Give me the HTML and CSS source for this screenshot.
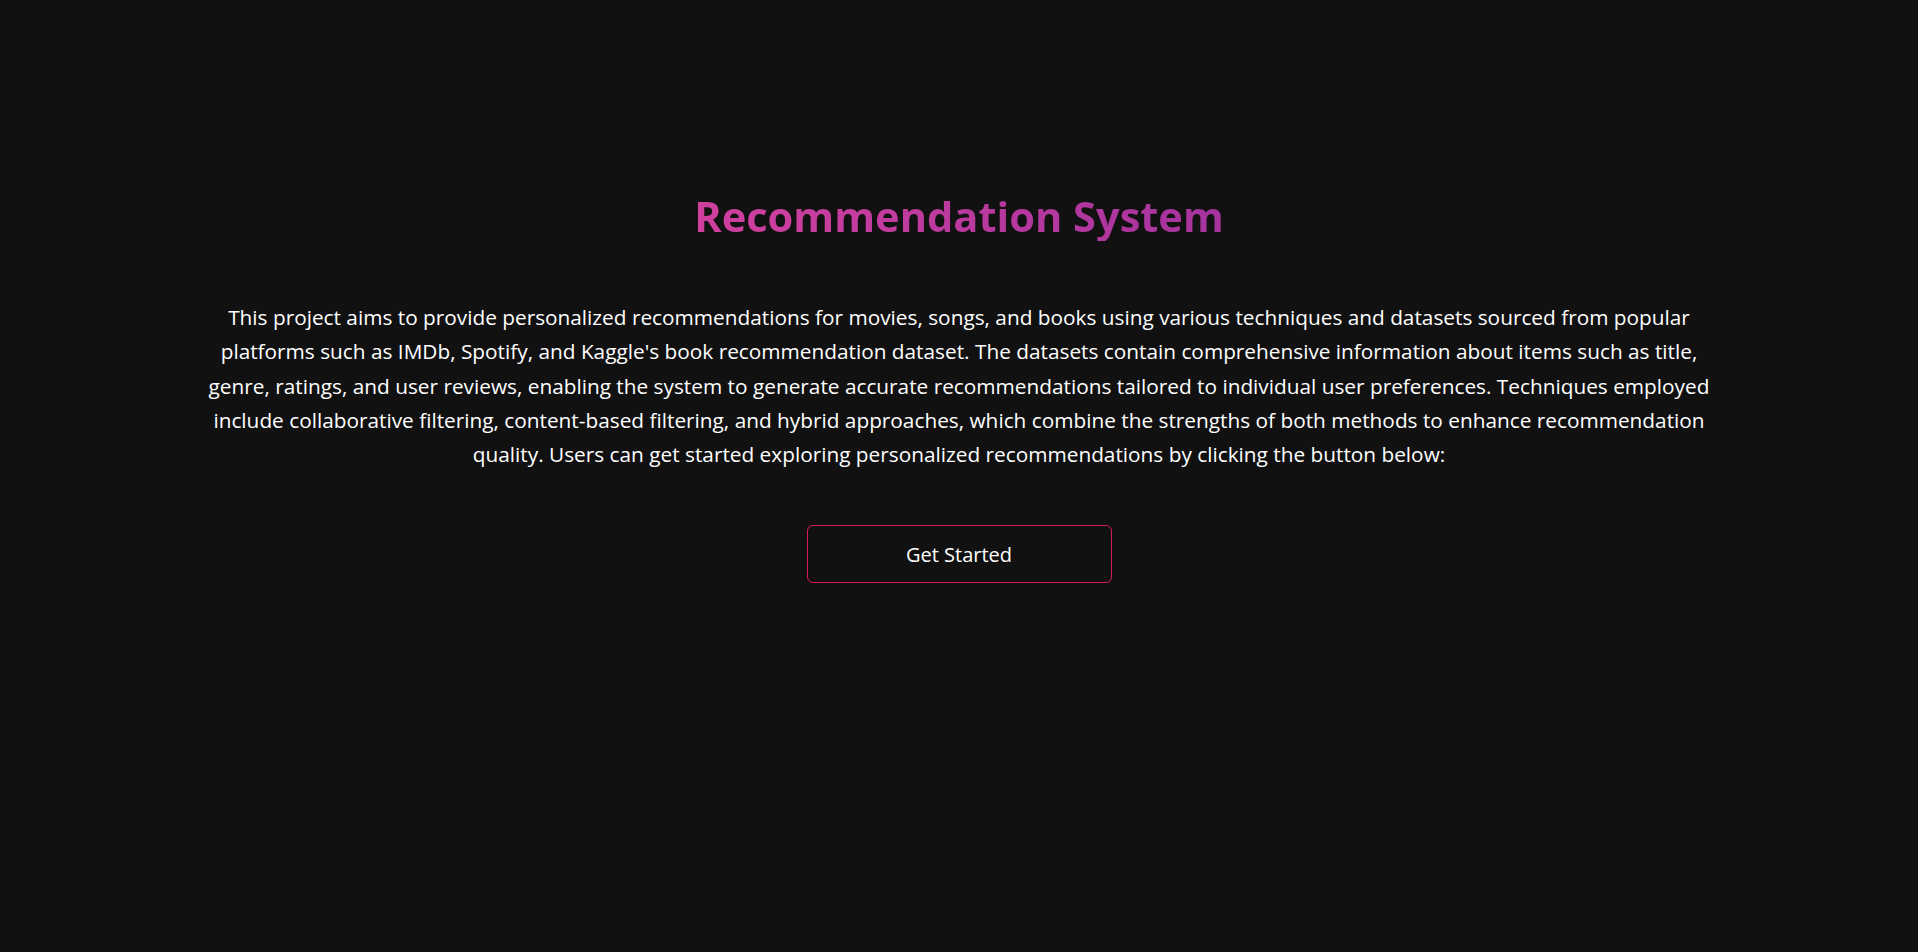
FILE: index.html
```html
<!DOCTYPE html>
<html lang="en">
<head>
<meta charset="utf-8">
<title>Recommendation System</title>
<link rel="stylesheet" href="styles.css">
</head>
<body>
<main class="hero">
  <h1 class="title">Recommendation System</h1>
  <p class="intro">This project aims to provide personalized recommendations for movies, songs, and books using various techniques and datasets sourced from popular platforms such as IMDb, Spotify, and Kaggle's book recommendation dataset. The datasets contain comprehensive information about items such as title, genre, ratings, and user reviews, enabling the system to generate accurate recommendations tailored to individual user preferences. Techniques employed include collaborative filtering, content-based filtering, and hybrid approaches, which combine the strengths of both methods to enhance recommendation quality. Users can get started exploring personalized recommendations by clicking the button below:</p>
  <button class="start-btn" type="button">Get Started</button>
</main>
</body>
</html>
```
FILE: styles.css
```css
html, body {
  margin: 0;
  padding: 0;
  height: 100%;
}
body {
  background: #111111;
  color: #ffffff;
  font-family: "Open Sans", "Noto Sans", sans-serif;
}
.hero {
  display: flex;
  flex-direction: column;
  align-items: center;
  padding-top: 191px;
}
.title {
  margin: 0;
  font-size: 41.6px;
  line-height: 50px;
  font-weight: 700;
  background: linear-gradient(90deg, #d0409e, #a6339e);
  -webkit-background-clip: text;
  background-clip: text;
  color: transparent;
}
.intro {
  margin: 59px 0 0;
  width: 1520px;
  text-align: center;
  font-size: 20.8px;
  line-height: 34.3px;
}
.start-btn {
  margin-top: 54px;
  width: 305px;
  height: 58px;
  background: transparent;
  border: 1px solid #d81b60;
  border-radius: 6px;
  color: #ffffff;
  font-family: inherit;
  font-size: 20px;
}
```
